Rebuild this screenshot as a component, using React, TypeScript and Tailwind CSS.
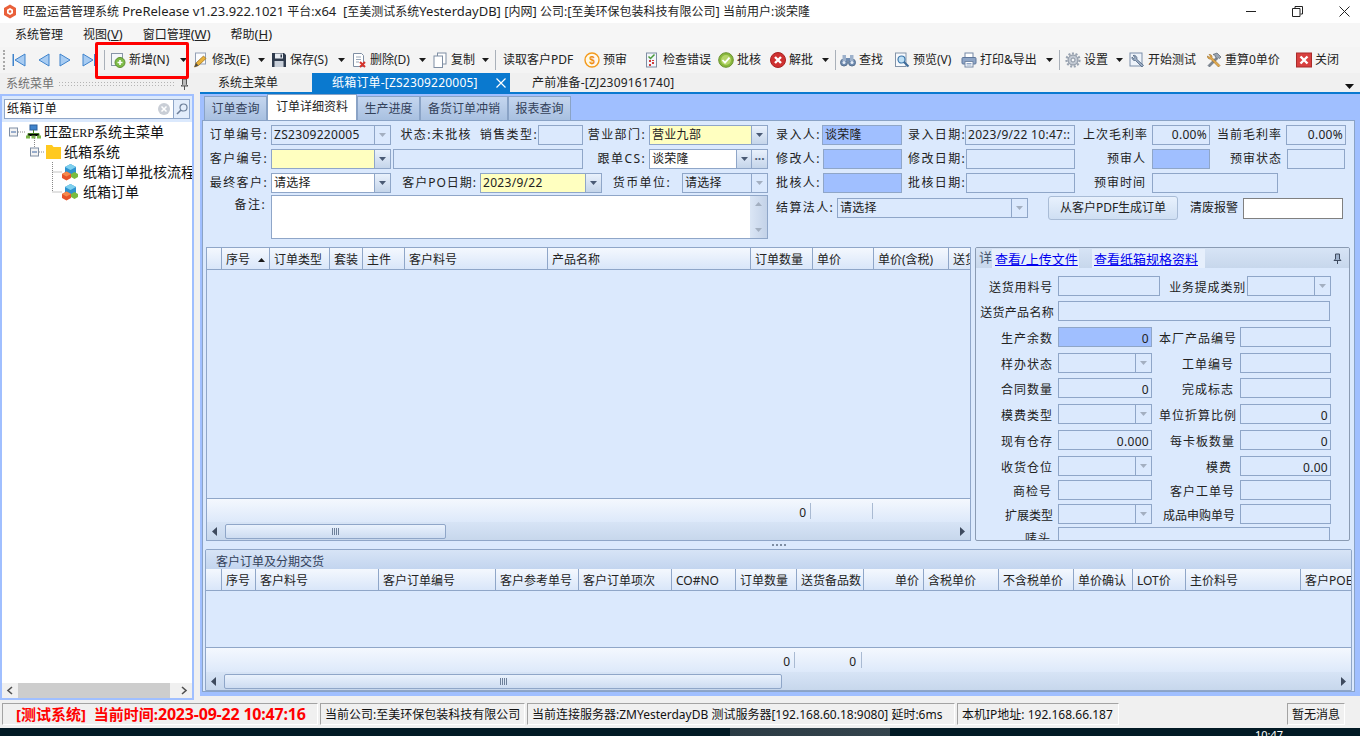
import type { ReactNode } from 'react'

const line = 'border border-[#8fa6c8]'

function Ico({ children, cls = 'w-[16px] h-[16px]' }: { children: ReactNode; cls?: string }) {
  return (
    <svg viewBox="0 0 16 16" className={`${cls} shrink-0`} fill="none">
      {children}
    </svg>
  )
}

function Caret({ fill = '#1a1a1a' }: { fill?: string }) {
  return (
    <svg width="7" height="4" viewBox="0 0 7 4" className="shrink-0">
      <path d="M0 0h7L3.5 4z" fill={fill} />
    </svg>
  )
}

const Doc = () => <path d="M2.5 1.5h8l2 2v11h-10z" fill="#fff" stroke="#7f8ea3" />

const icons: Record<string, ReactNode> = {
  add: (
    <Ico>
      <rect x="1.5" y="1.5" width="11" height="12" fill="#f4f7fb" stroke="#8795a8" />
      <circle cx="10" cy="10.5" r="5" fill="#7dbb47" stroke="#5f8f35" />
      <path d="M10 8v5M7.5 10.5h5" stroke="#fff" strokeWidth="1.6" />
    </Ico>
  ),
  edit: (
    <Ico>
      <rect x="2.5" y="1" width="10" height="11" fill="#fbfcfe" stroke="#93a0b5" />
      <path d="M1.5 15l1.5-4 7.5-7 2.5 2.5-7.5 7z" fill="#e9b23c" stroke="#a2741f" strokeWidth=".8" />
      <path d="M1.5 15l1.5-4 2.5 2.5z" fill="#4a4a4a" />
    </Ico>
  ),
  save: (
    <Ico>
      <path d="M1 1h12l2 2v12H1z" fill="#2f3b4d" />
      <rect x="4" y="1.5" width="8" height="5" fill="#e9edf3" />
      <rect x="3.5" y="9" width="9" height="6" fill="#c9d0da" />
      <rect x="9.5" y="2.5" width="1.5" height="3" fill="#2f3b4d" />
    </Ico>
  ),
  del: (
    <Ico>
      <Doc />
      <path d="M5 5h5M5 7.5h5M5 10h3" stroke="#9aa7b8" />
      <path d="M9 10l5 5M14 10l-5 5" stroke="#d5332c" strokeWidth="2" />
    </Ico>
  ),
  copy: (
    <Ico>
      <rect x="5.5" y="1" width="8.5" height="11" fill="#fff" stroke="#7f8ea3" />
      <rect x="2" y="4" width="8.5" height="11.5" fill="#fff" stroke="#7f8ea3" />
    </Ico>
  ),
  audit: (
    <Ico>
      <circle cx="8" cy="8" r="7" fill="#fff8e8" stroke="#f39a1d" strokeWidth="1.4" />
      <text x="8" y="11.5" textAnchor="middle" fontSize="10" fontWeight="700" fill="#ee8d12" fontFamily="Liberation Sans">
        $
      </text>
    </Ico>
  ),
  check: (
    <Ico>
      <rect x="2.5" y="1" width="10" height="14" fill="#f3f6fb" stroke="#7f8ea3" />
      <path d="M4.5 4.5l2 2 4-4" stroke="#4a9a3a" strokeWidth="1.5" />
      <path d="M5 8h2v2H5zM8 10h2v2H8zM5 12h2v2H5zM8 8h2v1H8z" fill="#d13c3c" />
    </Ico>
  ),
  approve: (
    <Ico>
      <circle cx="8" cy="8" r="7.3" fill="#89b83c" stroke="#6a9230" />
      <circle cx="8" cy="8" r="5" fill="#b5d56a" />
      <path d="M4.5 8l2.5 2.7 4.5-5" stroke="#fff" strokeWidth="1.8" />
    </Ico>
  ),
  reject: (
    <Ico>
      <circle cx="8" cy="8" r="7.5" fill="#cf3131" stroke="#a82323" />
      <path d="M5 5l6 6M11 5l-6 6" stroke="#fff" strokeWidth="2.4" />
    </Ico>
  ),
  find: (
    <Ico>
      <circle cx="4" cy="10.5" r="3.5" fill="#6f8bb0" stroke="#56708f" />
      <circle cx="12" cy="10.5" r="3.5" fill="#6f8bb0" stroke="#56708f" />
      <circle cx="4" cy="10.5" r="1.5" fill="#e6eef8" />
      <circle cx="12" cy="10.5" r="1.5" fill="#e6eef8" />
      <rect x="2.5" y="3" width="3.5" height="6" fill="#9db1cb" />
      <rect x="10" y="3" width="3.5" height="6" fill="#9db1cb" />
      <rect x="6" y="6" width="4" height="3" fill="#6f8bb0" />
    </Ico>
  ),
  view: (
    <Ico>
      <rect x="1.5" y="1" width="10.5" height="13.5" fill="#f7f9fc" stroke="#8393a8" />
      <circle cx="7.5" cy="7.5" r="3.5" fill="#bfe0f6" stroke="#3d77ab" strokeWidth="1.2" />
      <path d="M10 10l4.5 4.5" stroke="#3d6a98" strokeWidth="2" />
    </Ico>
  ),
  print: (
    <Ico>
      <rect x="4" y="1" width="8" height="5" fill="#fff" stroke="#7488a5" />
      <rect x="1" y="5.5" width="14" height="6.5" rx="1" fill="#8ea5c6" stroke="#5f779b" />
      <rect x="4" y="9.5" width="8" height="5.5" fill="#fff" stroke="#7488a5" />
      <path d="M5.5 11.5h5M5.5 13h5" stroke="#8ea5c6" />
    </Ico>
  ),
  gear: (
    <Ico>
      <circle cx="8" cy="8" r="5" fill="#c3cad4" stroke="#87919f" />
      <circle cx="8" cy="8" r="6.5" stroke="#99a3b1" strokeWidth="2.2" strokeDasharray="2 1.6" />
      <circle cx="8" cy="8" r="2" fill="#f4f6f9" stroke="#87919f" />
    </Ico>
  ),
  test: (
    <Ico>
      <rect x="1" y="1" width="12" height="13" fill="#eef3fa" stroke="#7a8ea9" />
      <path d="M4 3.5a3 3 0 0 1 3.8 3.8l6.7 6-1.5 1.7-6.5-6.5A3 3 0 0 1 3 5l1.8 1.6L6 5.3z" fill="#9cadc4" stroke="#4f6480" strokeWidth=".8" />
    </Ico>
  ),
  tools: (
    <Ico>
      <path d="M2 13.5l8-8 1.5 1.5-8 8z" fill="#7d8793" stroke="#59636f" strokeWidth=".6" />
      <path d="M7 2.5l4-1.5 4 4-1.5 1.5-1-.7-1 1L9 4.5l.7-.7z" fill="#9aa5b2" stroke="#59636f" strokeWidth=".7" />
      <path d="M3 2.5a2.5 2.5 0 0 1 3 3l8 8-1.5 1.5-8-8a2.5 2.5 0 0 1-3-3l1.8 1.3 1.2-1.2z" fill="#e2a94d" stroke="#9a6c22" strokeWidth=".6" />
    </Ico>
  ),
  close: (
    <Ico>
      <rect x=".5" y="1" width="15" height="14" fill="#d8403f" stroke="#a92b2b" />
      <path d="M4.5 4.5l7 7M11.5 4.5l-7 7" stroke="#fff" strokeWidth="2.4" />
    </Ico>
  ),
}

function Nav({ flip = false, bar = false }: { flip?: boolean; bar?: boolean }) {
  return (
    <svg width="14" height="14" viewBox="0 0 14 14" className={flip ? 'shrink-0 -scale-x-100' : 'shrink-0'}>
      <path d="M13 1v12L3 7z" fill="#a8ccf2" stroke="#3f83cc" />
      {bar && <rect x=".5" y="1" width="1.5" height="12" fill="#3f83cc" />}
    </svg>
  )
}

function Sep() {
  return <div className="w-px h-[20px] bg-[#a9b0b9] shrink-0" />
}

function Tool({ cls, icon, label, caret }: { cls: string; icon?: string; label: string; caret?: boolean }) {
  return (
    <div className={`flex items-center shrink-0 ${cls}`}>
      {icon && icons[icon]}
      <span className="ml-[3px] whitespace-nowrap">{label}</span>
      {caret && (
        <span className="ml-auto pr-[6px]">
          <Caret />
        </span>
      )}
    </div>
  )
}

function Toolbar() {
  return (
    <div className="relative flex items-center h-[26px] bg-[#f4f4f4] text-[12px] text-[#222] pl-[3px]">
      <div className="w-[3px] h-[20px] border-l-2 border-dotted border-[#a9a9a9] mr-[6px]" />
      <Nav bar />
      <div className="w-[10px]" />
      <Nav />
      <div className="w-[9px]" />
      <Nav flip />
      <div className="w-[9px]" />
      <Nav flip bar />
      <div className="w-[8px]" />
      <Sep />
      <div className="w-[5px]" />
      <Tool cls="w-[83px]" icon="add" label="新增(N)" caret />
      <Tool cls="w-[78px]" icon="edit" label="修改(E)" caret />
      <Tool cls="w-[80px]" icon="save" label="保存(S)" caret />
      <Tool cls="w-[81px]" icon="del" label="删除(D)" caret />
      <Tool cls="w-[63px]" icon="copy" label="复制" caret />
      <Sep />
      <Tool cls="w-[88px] pl-[4px]" label="读取客户PDF" />
      <Tool cls="w-[60px]" icon="audit" label="预审" />
      <Tool cls="w-[74px]" icon="check" label="检查错误" />
      <Tool cls="w-[52px]" icon="approve" label="批核" />
      <Tool cls="w-[65px]" icon="reject" label="解批" caret />
      <Sep />
      <Tool cls="w-[58px] pl-[4px]" icon="find" label="查找" />
      <Tool cls="w-[67px]" icon="view" label="预览(V)" />
      <Tool cls="w-[98px]" icon="print" label="打印&导出" caret />
      <Sep />
      <Tool cls="w-[69px] pl-[5px]" icon="gear" label="设置" caret />
      <Tool cls="w-[77px]" icon="test" label="开始测试" />
      <Tool cls="w-[90px]" icon="tools" label="重算0单价" />
      <Tool cls="w-[60px]" icon="close" label="关闭" />
      {/* annotation frame drawn over the screenshot */}
      <div className="absolute left-[95px] top-[-5px] w-[94px] h-[37px] border-[3px] border-[#ff0000] rounded-[2px]" />
    </div>
  )
}

function Lbl({ cls, children }: { cls: string; children: ReactNode }) {
  return <div className={`shrink-0 whitespace-nowrap ${cls}`}>{children}</div>
}

function Inp({ cls, value, right, lh = 'leading-[18px]' }: { cls: string; value?: string; right?: boolean; lh?: string }) {
  return (
    <div className={`shrink-0 h-[20px] overflow-hidden whitespace-nowrap px-[2px] tracking-[.3px] ${lh} ${line} ${right ? 'text-right' : ''} ${cls}`}>
      {value}
    </div>
  )
}

function Combo({ cls, value, disabled, bg = '' }: { cls: string; value?: string; disabled?: boolean; bg?: string }) {
  return (
    <div className={`shrink-0 flex h-[20px] ${line} ${cls}`}>
      <div className={`flex-1 min-w-0 px-[2px] leading-[18px] whitespace-nowrap overflow-hidden tracking-[.3px] ${bg}`}>{value}</div>
      <div className={`w-[16px] border-l border-[#8fa6c8] flex items-center justify-center ${disabled ? '' : 'bg-gradient-to-b from-[#e9f1fc] to-[#c5d5ea]'}`}>
        <Caret fill={disabled ? '#a3afc0' : '#4a5a74'} />
      </div>
    </div>
  )
}

function OrderForm() {
  return (
    <div className="flex h-[126px] pt-[4px] pl-[2px] text-[12px] text-[#222] leading-[20px] tracking-[1.4px]">
      <div className="w-[571px] shrink-0 flex flex-col gap-[4px]">
        <div className="flex">
          <Lbl cls="w-[66px] text-right pr-[3px]">订单编号:</Lbl>
          <Combo cls="w-[120px]" value="ZS2309220005" disabled />
          <Lbl cls="w-[81px] text-right">状态:未批核</Lbl>
          <Lbl cls="w-[66px] text-right">销售类型:</Lbl>
          <Inp cls="w-[45px]" />
          <Lbl cls="w-[66px] text-right pr-[3px]">营业部门:</Lbl>
          <Combo cls="w-[119px]" value="营业九部" bg="bg-[#ffffc0]" />
        </div>
        <div className="flex">
          <Lbl cls="w-[66px] text-right pr-[3px]">客户编号:</Lbl>
          <Combo cls="w-[120px]" bg="bg-[#ffffc0]" />
          <Inp cls="w-[190px] ml-[2px]" />
          <Lbl cls="w-[66px] text-right pr-[3px]">跟单CS:</Lbl>
          <div className={`shrink-0 flex w-[119px] h-[20px] tracking-[.3px] ${line}`}>
            <div className="flex-1 bg-white px-[2px] leading-[18px]">谈荣隆</div>
            <div className="w-[15px] border-l border-[#8fa6c8] flex items-center justify-center bg-gradient-to-b from-[#e9f1fc] to-[#c5d5ea]">
              <Caret fill="#4a5a74" />
            </div>
            <div className="w-[16px] border-l border-[#8fa6c8] flex items-center justify-center bg-gradient-to-b from-[#e9f1fc] to-[#c5d5ea] text-[12px] font-bold leading-[12px] tracking-normal text-[#4a5a74]">
              ···
            </div>
          </div>
        </div>
        <div className="flex">
          <Lbl cls="w-[66px] text-right pr-[3px]">最终客户:</Lbl>
          <Combo cls="w-[120px]" value="请选择" bg="bg-white" />
          <Lbl cls="w-[89px] text-right pr-[3px] tracking-[1px]">客户PO日期:</Lbl>
          <Combo cls="w-[122px]" value="2023/9/22" bg="bg-[#ffffc0]" />
          <Lbl cls="w-[80px] text-right pr-[11px]">货币单位:</Lbl>
          <Combo cls="w-[86px]" value="请选择" disabled />
        </div>
        <div className="flex -mt-[2px]">
          <Lbl cls="w-[66px] text-right pr-[5px]">备注:</Lbl>
          <div className={`w-[497px] h-[44px] flex justify-end bg-white ${line}`}>
            <div className="w-[17px] bg-gradient-to-r from-[#dbe6f5] to-[#c3d2e8] flex flex-col items-center justify-between py-[6px]">
              <span className="rotate-180 leading-[4px] flex">
                <Caret fill="#a3afc0" />
              </span>
              <span className="leading-[4px] flex">
                <Caret fill="#a3afc0" />
              </span>
            </div>
          </div>
        </div>
      </div>
      <div className="flex flex-col gap-[4px]">
        <div className="flex">
          <Lbl cls="w-[46px]">录入人:</Lbl>
          <Inp cls="w-[80px] bg-[#a0bfff]" value="谈荣隆" />
          <Lbl cls="w-[57px] ml-[6px]">录入日期:</Lbl>
          <Inp cls="w-[110px]" value="2023/9/22 10:47::" />
          <Lbl cls="w-[77px] text-right pr-[4px] tracking-[1px]">上次毛利率</Lbl>
          <Inp cls="w-[58px]" value="0.00%" right />
          <Lbl cls="w-[76px] text-right pr-[4px] tracking-[1px]">当前毛利率</Lbl>
          <Inp cls="w-[60px]" value="0.00%" right />
        </div>
        <div className="flex">
          <Lbl cls="w-[47px]">修改人:</Lbl>
          <Inp cls="w-[79px] bg-[#a0bfff]" />
          <Lbl cls="w-[58px] ml-[6px]">修改日期:</Lbl>
          <Inp cls="w-[109px]" />
          <Lbl cls="w-[77px] text-right pr-[6px] tracking-[1px]">预审人</Lbl>
          <Inp cls="w-[58px] bg-[#a0bfff]" />
          <Lbl cls="w-[77px] text-right pr-[5px] tracking-[1px]">预审状态</Lbl>
          <Inp cls="w-[58px]" />
        </div>
        <div className="flex">
          <Lbl cls="w-[47px]">批核人:</Lbl>
          <Inp cls="w-[79px] bg-[#a0bfff]" />
          <Lbl cls="w-[58px] ml-[6px]">批核日期:</Lbl>
          <Inp cls="w-[109px]" />
          <Lbl cls="w-[77px] text-right pr-[6px] tracking-[1px]">预审时间</Lbl>
          <Inp cls="w-[126px]" />
        </div>
        <div className="flex items-center h-[24px] -mt-[1px]">
          <Lbl cls="w-[61px]">结算法人:</Lbl>
          <Combo cls="w-[191px]" value="请选择" disabled />
          <div className="ml-[20px] w-[130px] h-[24px] shrink-0 rounded-[3px] border border-[#a9bcd6] bg-gradient-to-b from-[#e8f1fd] to-[#cfdff3] text-center leading-[22px] tracking-normal">
            从客户PDF生成订单
          </div>
          <Lbl cls="w-[65px] text-right pr-[5px] tracking-normal">清废报警</Lbl>
          <div className="w-[100px] h-[21px] shrink-0 bg-white border border-[#808080]" />
        </div>
      </div>
    </div>
  )
}

const orderCols = [
  { cls: 'w-[15px]', t: '' },
  { cls: 'w-[48px]', t: '序号', sort: true },
  { cls: 'w-[60px]', t: '订单类型' },
  { cls: 'w-[33px]', t: '套装' },
  { cls: 'w-[42px]', t: '主件' },
  { cls: 'w-[143px]', t: '客户料号' },
  { cls: 'w-[203px]', t: '产品名称' },
  { cls: 'w-[62px]', t: '订单数量' },
  { cls: 'w-[61px]', t: '单价' },
  { cls: 'w-[75px]', t: '单价(含税)' },
  { cls: 'w-[40px]', t: '送货备品' },
]

const planCols = [
  { cls: 'w-[16px]', t: '' },
  { cls: 'w-[34px]', t: '序号' },
  { cls: 'w-[123px]', t: '客户料号' },
  { cls: 'w-[117px]', t: '客户订单编号' },
  { cls: 'w-[83px]', t: '客户参考单号' },
  { cls: 'w-[93px]', t: '客户订单项次' },
  { cls: 'w-[64px]', t: 'CO#NO' },
  { cls: 'w-[61px]', t: '订单数量' },
  { cls: 'w-[67px]', t: '送货备品数' },
  { cls: 'w-[60px] text-right', t: '单价' },
  { cls: 'w-[75px]', t: '含税单价' },
  { cls: 'w-[75px]', t: '不含税单价' },
  { cls: 'w-[59px]', t: '单价确认' },
  { cls: 'w-[53px]', t: 'LOT价' },
  { cls: 'w-[115px]', t: '主价料号' },
  { cls: 'w-[60px]', t: '客户POE' },
]

function GridHead({ cols }: { cols: { cls: string; t: string; sort?: boolean }[] }) {
  return (
    <div className="flex h-[22px] shrink-0 overflow-hidden border-b border-[#8fa6c8] bg-gradient-to-b from-[#f4f8fe] to-[#d9e6f9] text-[12px] text-[#222] leading-[20px]">
      {cols.map((c, i) => (
        <div key={i} className={`shrink-0 flex items-center h-full px-[4px] pt-[3px] whitespace-nowrap overflow-hidden border-r border-[#8fa6c8] ${c.cls}`}>
          <span className={c.cls.includes('text-right') ? 'ml-auto' : ''}>{c.t}</span>
          {c.sort && (
            <span className="ml-[8px] rotate-180 flex">
              <Caret />
            </span>
          )}
        </div>
      ))}
    </div>
  )
}

function HScroll({ thumb }: { thumb: string }) {
  return (
    <div className="flex items-center h-[18px] shrink-0 bg-gradient-to-b from-[#d7e4f6] to-[#c7d7ec] px-[5px]">
      <svg width="5" height="9" viewBox="0 0 5 9" className="shrink-0 mr-[8px]">
        <path d="M5 0v9L0 4.5z" fill="#3e4a5e" />
      </svg>
      <div className={`h-[15px] shrink-0 rounded-[2px] border border-[#8fa6c8] bg-gradient-to-b from-[#eaf2fd] to-[#cddcf1] flex items-center justify-center ${thumb}`}>
        <div className="w-[7px] h-[7px] bg-[repeating-linear-gradient(90deg,#6d7f99_0,#6d7f99_1px,transparent_1px,transparent_2px)]" />
      </div>
      <svg width="5" height="9" viewBox="0 0 5 9" className="shrink-0 ml-auto">
        <path d="M0 0v9l5-4.5z" fill="#3e4a5e" />
      </svg>
    </div>
  )
}

function Row({ cls, children }: { cls: string; children: ReactNode }) {
  return <div className={`flex items-start shrink-0 ${cls}`}>{children}</div>
}

function Dl({ cls, children }: { cls: string; children: ReactNode }) {
  return <div className={`shrink-0 text-right whitespace-nowrap leading-[24px] h-[20px] ${cls}`}>{children}</div>
}

const detailLh = 'leading-[21px]'

function DetailPanel() {
  return (
    <div className="w-[375px] h-[294px] ml-[4px] shrink-0 flex flex-col overflow-hidden rounded-[2px] border border-[#8a9bb3] text-[12px] text-[#222]">
      <div className="flex items-center h-[20px] shrink-0 bg-gradient-to-b from-[#d7e4f6] to-[#c7d7ec] pl-[3px]">
        <span className="w-[13px] text-[13px] text-[#44546c]">详</span>
        <span className="bg-[#e6effc] text-[13px] text-[#0000ee] underline h-[19px] leading-[21px] w-[87px] pl-[3px] whitespace-nowrap">查看/上传文件</span>
        <span className="ml-[13px] bg-[#e6effc] text-[13px] text-[#0000ee] underline h-[19px] leading-[21px] w-[113px] pl-[2px] whitespace-nowrap">查看纸箱规格资料</span>
        <svg width="9" height="11" viewBox="0 0 9 11" className="ml-auto mr-[7px]">
          <path d="M2.5 1h4v5l1.500 1.500H1L2.500 6zM4.500 7.500V11" stroke="#3e4a5e" fill="#9fb2cc" />
        </svg>
      </div>
      <div className="flex flex-col pt-[8px] flex-1 min-h-0">
        <Row cls="h-[25px]">
          <Dl cls="w-[79px] pr-[2px] tracking-[.8px]">送货用料号</Dl>
          <Inp cls="w-[102px] ml-[3px]" lh={detailLh} />
          <Dl cls="w-[87px] pr-[1px] tracking-[.8px]">业务提成类别</Dl>
          <Combo cls="w-[84px]" disabled />
        </Row>
        <Row cls="h-[26px]">
          <Dl cls="w-[79px] pr-[1px] tracking-[.3px]">送货产品名称</Dl>
          <Inp cls="w-[272px] ml-[3px]" lh={detailLh} />
        </Row>
        <Row cls="h-[26px]">
          <Dl cls="w-[79px] pr-[2px] tracking-[1px]">生产余数</Dl>
          <Inp cls="w-[94px] ml-[3px] bg-[#a0bfff]" value="0" right lh={detailLh} />
          <Dl cls="w-[88px] pr-[3px] tracking-[1px]">本厂产品编号</Dl>
          <Inp cls="w-[91px]" lh={detailLh} />
        </Row>
        <Row cls="h-[25px]">
          <Dl cls="w-[79px] pr-[2px] tracking-[1px]">样办状态</Dl>
          <Combo cls="w-[94px] ml-[3px]" disabled />
          <Dl cls="w-[88px] pr-[6px] tracking-[1px]">工单编号</Dl>
          <Inp cls="w-[91px]" lh={detailLh} />
        </Row>
        <Row cls="h-[26px]">
          <Dl cls="w-[79px] pr-[2px] tracking-[1px]">合同数量</Dl>
          <Inp cls="w-[94px] ml-[3px]" value="0" right lh={detailLh} />
          <Dl cls="w-[88px] pr-[6px] tracking-[1px]">完成标志</Dl>
          <Inp cls="w-[91px]" lh={detailLh} />
        </Row>
        <Row cls="h-[26px]">
          <Dl cls="w-[79px] pr-[2px] tracking-[1px]">模费类型</Dl>
          <Combo cls="w-[94px] ml-[3px]" disabled />
          <Dl cls="w-[88px] pr-[3px] tracking-[1px]">单位折算比例</Dl>
          <Inp cls="w-[91px]" value="0" right lh={detailLh} />
        </Row>
        <Row cls="h-[26px]">
          <Dl cls="w-[79px] pr-[2px] tracking-[1px]">现有仓存</Dl>
          <Inp cls="w-[94px] ml-[3px]" value="0.000" right lh={detailLh} />
          <Dl cls="w-[88px] pr-[5px] tracking-[1px]">每卡板数量</Dl>
          <Inp cls="w-[91px]" value="0" right lh={detailLh} />
        </Row>
        <Row cls="h-[24px]">
          <Dl cls="w-[79px] pr-[2px] tracking-[1px]">收货仓位</Dl>
          <Combo cls="w-[94px] ml-[3px]" disabled />
          <Dl cls="w-[88px] pr-[8px] tracking-[1px]">模费</Dl>
          <Inp cls="w-[91px]" value="0.00" right lh={detailLh} />
        </Row>
        <Row cls="h-[24px]">
          <Dl cls="w-[79px] pr-[3px] tracking-[1px]">商检号</Dl>
          <Inp cls="w-[94px] ml-[3px]" lh={detailLh} />
          <Dl cls="w-[88px] pr-[5px] tracking-[1px]">客户工单号</Dl>
          <Inp cls="w-[91px]" lh={detailLh} />
        </Row>
        <Row cls="h-[23px]">
          <Dl cls="w-[79px] pr-[2px]">扩展类型</Dl>
          <Combo cls="w-[94px] ml-[3px]" disabled />
          <Dl cls="w-[88px] pr-[5px]">成品申购单号</Dl>
          <Inp cls="w-[91px]" lh={detailLh} />
        </Row>
        <Row cls="h-[20px]">
          <Dl cls="w-[79px] pr-[4px] tracking-[1px]">唛头</Dl>
          <Inp cls="w-[272px] ml-[3px]" lh={detailLh} />
        </Row>
      </div>
    </div>
  )
}

function OrderLines() {
  return (
    <div className="flex h-[294px] pl-[3px] shrink-0">
      <div className="w-[765px] shrink-0 flex flex-col border border-[#8fa6c8] overflow-hidden">
        <GridHead cols={orderCols} />
        <div className="flex-1" />
        <div className="h-[24px] shrink-0 flex items-center border-t border-[#8fa6c8] bg-gradient-to-b from-[#f4f8fe] to-[#dde9fa] text-[12px] text-[#222]">
          <div className="w-[604px] text-right pr-[4px] border-r border-[#a9bad2] h-[16px] leading-[20px]">0</div>
          <div className="w-[62px] border-r border-[#a9bad2] h-[16px]" />
        </div>
        <HScroll thumb="w-[221px]" />
      </div>
      <DetailPanel />
    </div>
  )
}

function PlanGrid() {
  return (
    <div className="ml-[2px] w-[1147px] h-[142px] shrink-0 flex flex-col overflow-hidden rounded-t-[2px] border border-[#8fa6c8] text-[12px] text-[#222]">
      <div className="h-[19px] shrink-0 bg-gradient-to-b from-[#d7e4f6] to-[#c3d5ef] pl-[10px] leading-[24px] text-[#33415a]">客户订单及分期交货</div>
      <GridHead cols={planCols} />
      <div className="flex-1" />
      <div className="h-[25px] shrink-0 flex items-center border-t border-[#8fa6c8] bg-gradient-to-b from-[#f4f8fe] to-[#dde9fa]">
        <div className="w-[589px] text-right pr-[4px] border-r border-[#a9bad2] h-[16px] leading-[20px]">0</div>
        <div className="w-[67px] text-right pr-[5px] border-r border-[#a9bad2] h-[16px] leading-[20px]">0</div>
      </div>
      <HScroll thumb="w-[558px]" />
    </div>
  )
}

function TreePanel() {
  return (
    <div className="w-[194px] h-[606px] shrink-0 bg-[#a0bfff] p-[2px] flex flex-col">
      <div className="h-[26px] shrink-0 bg-[#dbe9fd] flex items-center pl-[2px] pr-[2px]">
        <div className={`flex items-center w-[186px] h-[20px] ${line} bg-white text-[12px] tracking-[.6px] pl-[2px] text-[#111]`}>
          <span className="flex-1 leading-[20px]">纸箱订单</span>
          <svg width="14" height="14" viewBox="0 0 14 14" className="mr-[2px]">
            <circle cx="7" cy="7" r="6" fill="#c9ced6" />
            <path d="M4.5 4.5l5 5M9.5 4.5l-5 5" stroke="#fff" strokeWidth="1.5" />
          </svg>
          <div className="w-[16px] h-full border-l border-[#8fa6c8] bg-[#e3edfb] flex items-center justify-center">
            <svg width="12" height="12" viewBox="0 0 12 12" fill="none">
              <circle cx="7.5" cy="4.5" r="3.5" stroke="#6d7f99" strokeWidth="1.2" />
              <path d="M5 7l-4 4" stroke="#6d7f99" strokeWidth="1.6" />
            </svg>
          </div>
        </div>
      </div>
      <div className="flex-1 bg-white flex flex-col overflow-hidden min-h-0">
        <div className="flex-1 text-[14px] text-[#111] overflow-hidden font-['Liberation_Serif','Noto_Sans_CJK_SC',serif]">
          <div className="flex items-center h-[20px] pl-[7px]">
            <svg width="32" height="16" viewBox="0 0 32 16" className="shrink-0 mr-[3px]">
              <rect x=".5" y="4" width="8" height="8" fill="#f3f3f3" stroke="#7f8ea3" />
              <path d="M2 8h5" stroke="#3c67a5" />
              <path d="M9 8h8" stroke="#888" strokeDasharray="1 1" />
              <rect x="21" y="1" width="7" height="5" fill="#3f83cc" stroke="#2b5f9c" />
              <path d="M24.5 6v3M19 12V9.500h11V12" stroke="#4b7f2b" />
              <rect x="17" y="11.5" width="4" height="3" fill="#7ab648" />
              <rect x="22.5" y="11.5" width="4" height="3" fill="#7ab648" />
              <rect x="28" y="11.5" width="4" height="3" fill="#7ab648" />
            </svg>
            <span>
              旺盈<span className="text-[12px]">ERP</span>系统主菜单
            </span>
          </div>
          <div className="flex items-center h-[20px] pl-[27px]">
            <svg width="34" height="16" viewBox="0 0 34 16" className="shrink-0 mr-[1px] overflow-visible">
              <path d="M5.5 -8V4" stroke="#888" strokeDasharray="1 1" />
              <rect x="1.5" y="4" width="8" height="8" fill="#f3f3f3" stroke="#7f8ea3" />
              <path d="M3 8h5" stroke="#3c67a5" />
              <path d="M10 8h5" stroke="#888" strokeDasharray="1 1" />
              <path d="M17 1h6l1.5 2h7.500v12H17z" fill="#ffc91f" />
            </svg>
            <span>纸箱系统</span>
          </div>
          {['纸箱订单批核流程', '纸箱订单'].map((t, i) => (
            <div key={t} className="flex items-center h-[20px] pl-[50px] whitespace-nowrap">
              <svg width="28" height="16" viewBox="0 0 28 16" className="shrink-0 mr-[3px] overflow-visible">
                <path d={i === 0 ? 'M.5 -2V8h10' : 'M.5 -12V8h10'} stroke="#888" strokeDasharray="1 1" fill="none" />
                <path d="M13 3l5.500-3L24 3v6l-5.500 3L13 9z" fill="#2f93cf" />
                <path d="M13 3l5.500-3L24 3l-5.500 3z" fill="#7fd0ee" />
                <path d="M19 10l3.500-2L26 10v3l-3.500 2L19 13z" fill="#79bb3f" />
                <path d="M10 10l4.500-2.500L19 10v4l-4.500 2.500L10 14z" fill="#e8542a" />
                <path d="M10 10l4.500-2.500L19 10l-4.500 2.500z" fill="#f58a4e" />
              </svg>
              <span>{t}</span>
            </div>
          ))}
        </div>
        <div className="h-[15px] shrink-0 flex items-center bg-[#f0f0f0]">
          <svg width="16" height="9" viewBox="0 0 16 9" className="shrink-0">
            <path d="M10 1L6 4.500 10 8" stroke="#505050" strokeWidth="1.6" fill="none" />
          </svg>
          <div className="w-[152px] h-full bg-[#cdcdcd]" />
          <svg width="16" height="9" viewBox="0 0 16 9" className="ml-auto shrink-0">
            <path d="M6 1l4 3.500L6 8" stroke="#505050" strokeWidth="1.6" fill="none" />
          </svg>
        </div>
      </div>
    </div>
  )
}

function StatusCell({ cls, children }: { cls: string; children: ReactNode }) {
  return (
    <div className={`shrink-0 h-[22px] leading-[21px] whitespace-nowrap border-l border-t border-[#a3a3a3] border-r-white border-b-white border-r border-b overflow-hidden ${cls}`}>
      {children}
    </div>
  )
}

function L({ children }: { children: ReactNode }) {
  return <span className="text-[13px]">{children}</span>
}

export default function App() {
  return (
    <div className="w-[1360px] h-[736px] overflow-hidden flex flex-col bg-[#f0f0f0] font-['Noto_Sans','Noto_Sans_CJK_SC',sans-serif] text-[12px] text-[#222]">
      {/* title bar */}
      <div className="flex items-center h-[23px] shrink-0 bg-white pl-[3px]">
        <svg width="14" height="15" viewBox="0 0 14 15" className="shrink-0">
          <path d="M7 .5l6 3.500v7l-6 3.500-6-3.500v-7z" fill="#e9603a" />
          <path d="M7 4l3 1.800v3.400L7 11 4 9.200V5.800z" fill="#fff" />
          <path d="M7 6l1.300.8v1.400L7 9l-1.300-.8V6.800z" fill="#e9603a" />
        </svg>
        <span className="ml-[6px] whitespace-pre text-[12px] text-[#1f1f1f]">
          旺盈运营管理系统 <L>PreRelease v1.23.922.1021</L> 平台:<L>x64{'  '}[</L>至美测试系统<L>YesterdayDB] [</L>内网<L>]</L> 公司:<L>[</L>至美环保包装科技有限公司<L>]</L> 当前用户:谈荣隆
        </span>
        <div className="ml-auto flex items-center">
          <svg width="11" height="11" viewBox="0 0 11 11" className="mr-[35px]">
            <path d="M0 5.500h10" stroke="#222" />
          </svg>
          <svg width="11" height="11" viewBox="0 0 11 11" className="mr-[36px]">
            <path d="M3 2.500V.5h7.500V8H8.500M.5 2.500H8v8H.5z" stroke="#222" fill="none" />
          </svg>
          <svg width="11" height="11" viewBox="0 0 11 11" className="mr-[10px]">
            <path d="M.5.5l10 10M10.500.5l-10 10" stroke="#222" />
          </svg>
        </div>
      </div>

      {/* menu */}
      <div className="flex items-center h-[24px] shrink-0 bg-[#f6f6f6] pl-[15px] gap-[20px]">
        <span>系统管理</span>
        <span>视图<L>(<u>V</u>)</L></span>
        <span>窗口管理<L>(<u>W</u>)</L></span>
        <span>帮助<L>(<u>H</u>)</L></span>
      </div>

      <Toolbar />

      <div className="flex flex-1 min-h-0">
        <div className="w-[200px] shrink-0 flex flex-col">
          <div className="h-[21px] shrink-0 flex items-center pl-[6px] text-[#707070]">
            <span>系统菜单</span>
            <div className="w-[118px] h-[6px] ml-[4px] bg-[radial-gradient(#b5b5b5_1px,transparent_1px)] bg-[length:3px_3px]" />
            <svg width="9" height="12" viewBox="0 0 9 12" className="ml-[4px]">
              <path d="M2.5 1h4v5.500L8 8H1l1.500-1.500zM4.500 8v4" stroke="#555" fill="#bbb" />
            </svg>
          </div>
          <TreePanel />
        </div>

        <div className="flex-1 min-w-0 flex flex-col">
          {/* document tabs */}
          <div className="relative flex h-[19px] shrink-0 leading-[20px] whitespace-nowrap">
            <div className="w-[112px] pl-[18px]">系统主菜单</div>
            <div className="w-[198px] bg-[#0a79cf] text-white flex items-center pl-[20px]">
              <span className="flex-1 tracking-[.2px]">纸箱订单-[ZS2309220005]</span>
              <svg width="10" height="10" viewBox="0 0 10 10" className="mr-[4px]">
                <path d="M.5.5l9 9M9.500.5l-9 9" stroke="#fff" strokeWidth="1.2" />
              </svg>
            </div>
            <div className="pl-[22px] tracking-[.2px]">产前准备-[ZJ2309161740]</div>
            <svg width="9" height="5" viewBox="0 0 9 5" className="absolute right-[6px] top-[11px]">
              <path d="M0 0h9L4.500 5z" fill="#111" />
            </svg>
          </div>
          <div className="h-[2px] shrink-0 bg-[#0a79cf]" />

          {/* blue frame */}
          <div className="h-[602px] shrink-0 bg-[#a0bfff] flex flex-col pl-[2px] pr-[5px]">
            <div className="flex h-[26px] shrink-0 items-end pl-[2px] -mr-[5px]">
              {[
                { t: '订单查询', w: 'w-[63px]' },
                { t: '订单详细资料', w: 'w-[90px]', on: true },
                { t: '生产进度', w: 'w-[63px]' },
                { t: '备货订单冲销', w: 'w-[88px]' },
                { t: '报表查询', w: 'w-[63px]' },
              ].map((tab) => (
                <div
                  key={tab.t}
                  className={`${tab.w} text-center border border-b-0 border-[#8aa3c6] ${
                    tab.on ? 'h-[26px] bg-white leading-[24px]' : 'h-[24px] leading-[23px] bg-gradient-to-b from-[#c5d6ef] to-[#a8c0e0] text-[#33415a]'
                  }`}
                >
                  {tab.t}
                </div>
              ))}
            </div>
            <div className="h-[572px] shrink-0 bg-[#dbe9fd] border border-[#8aa3c6] flex flex-col overflow-hidden">
              <OrderForm />
              <OrderLines />
              <div className="h-[8px] shrink-0 flex justify-center items-center">
                <div className="w-[14px] h-[2px] bg-[repeating-linear-gradient(90deg,#7f8ea3_0,#7f8ea3_2px,transparent_2px,transparent_4px)]" />
              </div>
              <PlanGrid />
            </div>
          </div>
        </div>
      </div>

      {/* status bar */}
      <div className="h-[28px] shrink-0 flex items-center pl-[2px] gap-[2px] bg-[#f0f0f0] text-[12px] text-[#111]">
        <StatusCell cls="w-[316px] text-[15px] font-bold text-[#ff0000] pl-[13px]">
          <span className="whitespace-pre">
            [测试系统]{'  '}当前时间:<span className="text-[16px] tracking-[-.2px]">2023-09-22 10:47:16</span>
          </span>
        </StatusCell>
        <StatusCell cls="w-[205px] pl-[4px]">当前公司:至美环保包装科技有限公司</StatusCell>
        <StatusCell cls="w-[428px] pl-[4px]">当前连接服务器:ZMYesterdayDB 测试服务器[192.168.60.18:9080] 延时:6ms</StatusCell>
        <StatusCell cls="w-[162px] pl-[4px]">本机IP地址: 192.168.66.187</StatusCell>
        <StatusCell cls="w-[58px] ml-[166px] text-center">暂无消息</StatusCell>
      </div>

      {/* taskbar sliver */}
      <div className="relative h-[8px] shrink-0 flex bg-[#021a25]">
        <div className="w-[730px]" />
        <div className="w-[160px] bg-gradient-to-r from-[#2b3b44] to-[#34444d]" />
        <span className="absolute left-[1255px] top-[1px] text-[11px] leading-[12px] text-white">10:47</span>
      </div>
    </div>
  )
}
